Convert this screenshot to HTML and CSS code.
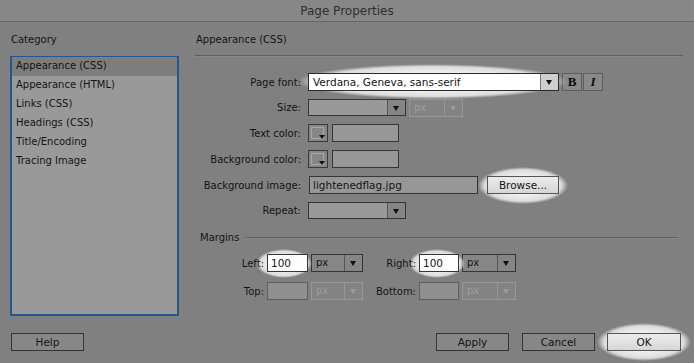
FILE: index.html
```html
<!DOCTYPE html>
<html lang="en">
<head>
  <meta charset="UTF-8">
  <meta name="viewport" content="width=device-width, initial-scale=1.0">
  <title>Page Properties</title>
  <link rel="stylesheet" href="styles.css">
</head>
<body>
  <div class="dialog">
    <div class="titlebar">Page Properties</div>

    <div class="main">
      <div class="sidebar">
        <div class="heading">Category</div>
        <ul class="categories">
          <li class="selected">Appearance (CSS)</li>
          <li>Appearance (HTML)</li>
          <li>Links (CSS)</li>
          <li>Headings (CSS)</li>
          <li>Title/Encoding</li>
          <li>Tracing Image</li>
        </ul>
      </div>

      <div class="panel">
        <div class="heading">Appearance (CSS)</div>
        <div class="rule"></div>

        <div class="form">
          <label>Page font:</label>
          <div class="field">
            <span class="glow glow-font">
              <span class="select white font-select"><span class="value">Verdana, Geneva, sans-serif</span><span class="arrow"></span></span>
            </span>
            <span class="style-btn bold">B</span>
            <span class="style-btn italic">I</span>
          </div>

          <label>Size:</label>
          <div class="field">
            <span class="select wide"><span class="value"></span><span class="arrow"></span></span>
            <span class="select unit disabled"><span class="value">px</span><span class="arrow"></span></span>
          </div>

          <label>Text color:</label>
          <div class="field">
            <span class="swatch"><span class="chip"></span><span class="corner"></span></span>
            <span class="input color-input"></span>
          </div>

          <label>Background color:</label>
          <div class="field">
            <span class="swatch"><span class="chip"></span><span class="corner"></span></span>
            <span class="input color-input"></span>
          </div>

          <label>Background image:</label>
          <div class="field">
            <span class="input image-input">lightenedflag.jpg</span>
            <span class="glow glow-browse">
              <span class="btn light browse">Browse...</span>
            </span>
          </div>

          <label>Repeat:</label>
          <div class="field">
            <span class="select wide"><span class="value"></span><span class="arrow"></span></span>
          </div>
        </div>

        <div class="group">Margins</div>

        <div class="margins">
          <label>Left:</label>
          <span class="glow glow-left"><span class="input white num">100</span></span>
          <span class="select unit"><span class="value">px</span><span class="arrow"></span></span>
          <label>Right:</label>
          <span class="glow glow-right"><span class="input white num">100</span></span>
          <span class="select unit"><span class="value">px</span><span class="arrow"></span></span>

          <label>Top:</label>
          <span class="input num disabled"></span>
          <span class="select unit disabled"><span class="value">px</span><span class="arrow"></span></span>
          <label>Bottom:</label>
          <span class="input num disabled"></span>
          <span class="select unit disabled"><span class="value">px</span><span class="arrow"></span></span>
        </div>
      </div>
    </div>

    <div class="footer">
      <span class="btn">Help</span>
      <span class="btn push">Apply</span>
      <span class="btn">Cancel</span>
      <span class="glow glow-ok"><span class="btn light ok">OK</span></span>
    </div>
  </div>
</body>
</html>
```

FILE: styles.css
```css
body {
  margin: 0;
  background: #808080;
  font-family: "DejaVu Sans", sans-serif;
  font-size: 10px;
  color: #141414;
}
.dialog {
  width: 694px;
  height: 363px;
  display: flex;
  flex-direction: column;
  background: #808080;
  overflow: hidden;
}
.titlebar {
  height: 21px;
  line-height: 22px;
  text-align: center;
  font-size: 12px;
  color: #2f2f2f;
  background: #878787;
  border-bottom: 1px solid #666;
}
.main {
  flex: 1;
  display: flex;
  min-height: 0;
}
.heading {
  margin-top: 11px;
  line-height: 14px;
  padding-left: 1px;
}

/* category list */
.sidebar {
  width: 169px;
  margin-left: 10px;
  display: flex;
  flex-direction: column;
}
.categories {
  list-style: none;
  margin: 9px 0 1px;
  padding: 0;
  flex: 1;
  background: #999;
  border: 2px solid #24578f;
  border-top-width: 1px;
}
.categories li {
  height: 19px;
  line-height: 18px;
  padding-left: 4px;
}
.categories li.selected {
  background: #7d7d7d;
}

/* right panel */
.panel {
  flex: 1;
  margin-left: 16px;
  margin-right: 11px;
}
.rule {
  margin-top: 8px;
  height: 1px;
  background: #5f5f5f;
  border-bottom: 1px solid #8a8a8a;
}
.form {
  margin-top: 16px;
  display: grid;
  grid-template-columns: 106px auto;
  grid-template-rows: 18px 17px 18px 18px 18px 17px;
  column-gap: 7px;
  row-gap: 8px;
}
.form label,
.margins label {
  position: relative;
  z-index: 1;
  justify-self: end;
  align-self: center;
  white-space: nowrap;
}
.field {
  display: flex;
  align-items: stretch;
  gap: 3px;
}

/* controls */
.select {
  box-sizing: border-box;
  display: flex;
  height: 100%;
  border: 1px solid #353535;
  background: #8f8f8f;
}
.select .value {
  flex: 1;
  padding-left: 4px;
  line-height: 16px;
  white-space: nowrap;
  overflow: hidden;
}
.select .arrow {
  width: 17px;
  position: relative;
  border-left: 1px solid #555;
  background: #858585;
}
.select .arrow::after {
  content: "";
  position: absolute;
  left: 5px;
  top: 50%;
  margin-top: -2px;
  border-left: 3.5px solid transparent;
  border-right: 3.5px solid transparent;
  border-top: 5px solid #111;
}
.select.white {
  background: #fff;
  border-color: #2a2a2a;
}
.select.white .arrow {
  background: #cfcfcf;
  border-left-color: #777;
}
.font-select {
  width: 251px;
  height: 18px;
}
.font-select .value {
  padding-left: 4px;
  font-size: 10.5px;
}
.wide {
  width: 98px;
}
.wide .value {
  background: #999;
}
.unit {
  width: 54px;
  height: 18px;
  background: #868686;
}
.select.disabled {
  border-color: #979797;
  background: #838383;
  color: #9e9e9e;
}
.select.disabled .arrow {
  background: #838383;
  border-left-color: #979797;
}
.select.disabled .arrow::after {
  border-top-color: #9c9c9c;
}

.style-btn {
  box-sizing: border-box;
  width: 20px;
  height: 18px;
  border: 1px solid #5d5d5d;
  background: #898989;
  text-align: center;
  line-height: 16px;
  font-family: "Liberation Serif", serif;
  font-weight: bold;
  font-size: 13px;
  color: #0c0c0c;
}
.style-btn.italic {
  margin-left: -2px;
  font-style: italic;
}

.input {
  box-sizing: border-box;
  display: block;
  height: 18px;
  border: 1px solid #363636;
  background: #979797;
  padding-left: 3px;
  line-height: 16px;
  white-space: nowrap;
}
.input.white {
  background: #fff;
}
.input.disabled {
  border-color: #5f5f5f;
  background: #8f8f8f;
}
.color-input {
  width: 67px;
  margin-left: 1px;
}
.image-input {
  width: 169px;
  margin-left: 1px;
  font-size: 10.5px;
}
.swatch {
  box-sizing: border-box;
  width: 20px;
  height: 18px;
  position: relative;
  border: 1px solid #3a3a3a;
  background: #868686;
}
.swatch .chip {
  position: absolute;
  left: 2px;
  top: 2px;
  width: 11px;
  height: 10px;
  border: 1px solid #a9a9a9;
}
.swatch .corner {
  position: absolute;
  right: 2px;
  bottom: 2px;
  border-left: 3px solid transparent;
  border-right: 3px solid transparent;
  border-top: 4px solid #111;
}

/* highlight ovals drawn behind some controls */
.glow {
  position: relative;
  z-index: 0;
  display: flex;
}
.glow::before {
  content: "";
  position: absolute;
  z-index: -1;
  border-radius: 50%;
  background: radial-gradient(closest-side, #f0f0f0 50%, #dcdcdc 85%, rgba(210, 210, 210, 0) 100%);
}
.glow-font::before {
  top: -9px;
  bottom: -8px;
  left: -10px;
  right: -8px;
}
.glow-browse {
  margin-left: 6px;
}
.glow-browse::before {
  top: -9px;
  bottom: -10px;
  left: -9px;
  right: -9px;
}
.glow-left::before {
  top: -5px;
  bottom: -6px;
  left: -11px;
  right: -4px;
}
.glow-right::before {
  top: -5px;
  bottom: -6px;
  left: -10px;
  right: -6px;
}
.glow > .num {
  flex: 1;
}
.glow-ok {
  margin-left: 12px;
}
.glow-ok::before {
  top: -10px;
  bottom: -10px;
  left: -10px;
  right: -10px;
}

/* margins group */
.group {
  margin-top: 12px;
  padding-left: 5px;
  line-height: 14px;
  display: flex;
  align-items: center;
}
.group::after {
  content: "";
  flex: 1;
  margin-left: 6px;
  margin-right: 5px;
  height: 1px;
  background: #5f5f5f;
  border-bottom: 1px solid #8a8a8a;
}
.margins {
  margin-top: 9px;
  display: grid;
  grid-template-columns: 69px 41px 52px 50px 40px 54px;
  grid-template-rows: 18px 18px;
  column-gap: 3px;
  row-gap: 10px;
}
.margins .unit {
  width: auto;
}
.num {
  font-size: 10.5px;
}

/* buttons */
.btn {
  box-sizing: border-box;
  display: block;
  height: 18px;
  width: 73px;
  border: 1px solid #343434;
  background: #878787;
  text-align: center;
  line-height: 16px;
  font-size: 10.5px;
}
.btn.light {
  background: linear-gradient(#ececec, #d6d6d6);
  border-color: #555;
}
.browse {
  width: 72px;
}
.ok {
  width: 74px;
}
.footer {
  display: flex;
  padding: 16px 13px 12px 11px;
}
.push {
  margin-left: auto;
  margin-right: 13px;
}
```
